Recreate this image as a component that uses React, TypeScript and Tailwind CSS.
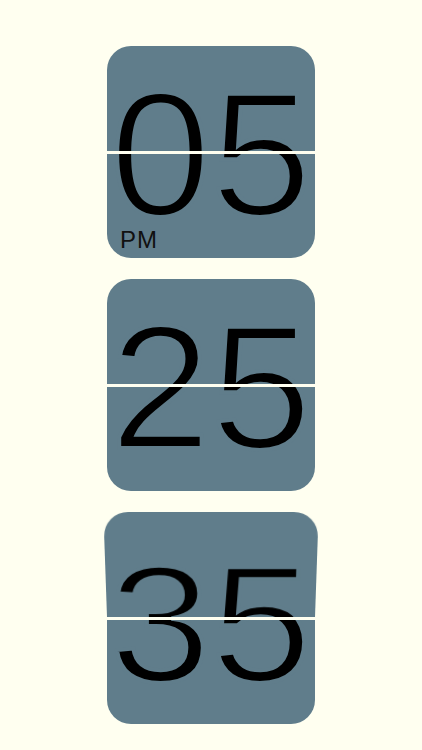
import React from 'react';

const FONT = { fontFamily: '"Liberation Sans", Arial, sans-serif' };

interface FlipCardProps {
  value: string;
  label?: string;
  flipping?: boolean;
}

function Digits({ value }: { value: string }) {
  return (
    <div className="h-[212px] w-full flex items-center justify-center pt-[4px]">
      <span className="inline-block scale-x-103 text-[176px] leading-none text-black [-webkit-text-stroke:4px_#607d8b]">
        {value}
      </span>
    </div>
  );
}

function FlipCard({ value, label, flipping }: FlipCardProps) {
  return (
    <div className="w-[208px] h-[212px] flex flex-col gap-[3px] perspective-[800px]">
      {/* top half, tilted forward while it flips */}
      <div
        className={
          'relative h-[105px] overflow-hidden rounded-t-[24px] bg-[#607d8b] origin-bottom ' +
          (flipping ? '-rotate-x-15' : '')
        }
      >
        <div
          className={
            'absolute top-0 left-0 w-full ' + (flipping ? 'scale-y-[0.86] origin-[50%_105px]' : '')
          }
        >
          <Digits value={value} />
        </div>
      </div>
      {/* bottom half */}
      <div className="relative h-[104px] overflow-hidden rounded-b-[24px] bg-[#607d8b]">
        <div className="absolute bottom-0 left-0 w-full">
          <Digits value={value} />
        </div>
        {label && (
          <span className="absolute left-[13px] bottom-[6px] text-[24px] leading-none tracking-[1px] text-[#111]">
            {label}
          </span>
        )}
      </div>
    </div>
  );
}

export default function App() {
  return (
    <div className="min-h-screen bg-[#fffff0] flex flex-col items-center pt-[46px] gap-[21px]" style={FONT}>
      <FlipCard value="05" label="PM" />
      <FlipCard value="25" />
      <FlipCard value="35" flipping />
    </div>
  );
}
